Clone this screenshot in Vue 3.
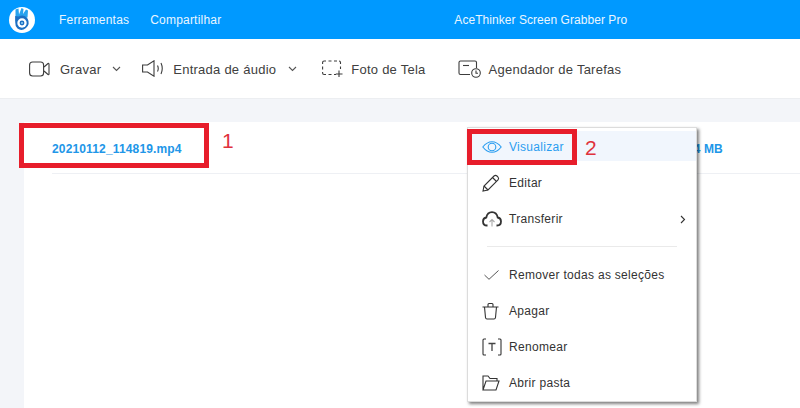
<script setup>
const menuTop = [
  { key: 'view', label: 'Visualizar', active: true },
  { key: 'edit', label: 'Editar' },
  { key: 'upload', label: 'Transferir', more: true },
]
const menuBottom = [
  { key: 'check', label: 'Remover todas as seleções' },
  { key: 'trash', label: 'Apagar' },
  { key: 'rename', label: 'Renomear' },
  { key: 'folder', label: 'Abrir pasta' },
]
</script>

<template>
  <div class="app">
    <header class="topbar">
      <svg class="logo" viewBox="0 0 26 26">
        <circle cx="13" cy="13" r="13" fill="#fff" />
        <path d="M6.500 2.500 9.500 1.500 10 7.500 12.500 1 14.500 2 14 7 17 2.500 19 3.500 18.500 10.500 6.500 14Z" fill="#27a3ee" />
        <path d="M6.200 9 9.500 9.500Q15 6.500 18.500 11.500 21.500 17 17 21 12.500 24.500 8.500 21.500 6 19 6.200 15Z" fill="#1c6fc2" />
        <circle cx="13" cy="16" r="4.700" fill="#fff" />
        <circle cx="13" cy="16" r="2.400" fill="#1c6fc2" />
        <circle cx="13" cy="16" r="1" fill="#8fd0f5" />
      </svg>
      <nav class="topnav">
        <span>Ferramentas</span>
        <span>Compartilhar</span>
      </nav>
      <span class="apptitle">AceThinker Screen Grabber Pro</span>
    </header>

    <div class="toolbar">
      <div class="tool tool-rec">
        <svg width="21" height="16" viewBox="0 0 21 16">
          <rect x="0.600" y="1" width="14" height="14" rx="3" />
          <path d="M15 6 19 2.500Q20 2 20 3V13Q20 14 19 13.500L15 10" />
        </svg>
        <span class="tool-label">Gravar</span>
        <svg class="caret" width="9" height="6" viewBox="0 0 9 6"><path d="M1 1 4.500 4.500 8 1" /></svg>
      </div>
      <div class="tool tool-audio">
        <svg width="22" height="17" viewBox="0 0 22 17">
          <path d="M.6 5H5.500L12 .8V16.200L5.500 12H.6Z" />
          <path d="M15.500 5.500Q17 8.500 15.500 11.500M19 3Q21.500 8.500 19 14" />
        </svg>
        <span class="tool-label">Entrada de áudio</span>
        <svg class="caret" width="9" height="6" viewBox="0 0 9 6"><path d="M1 1 4.500 4.500 8 1" /></svg>
      </div>
      <div class="tool tool-shot">
        <svg width="21" height="17" viewBox="0 0 21 17">
          <path d="M.6 4V2.500Q.6 1 2.100 1H4M6.500 1H9.500M12 1H15M17 1Q18.500 1 18.500 2.500V4M18.500 6.500V9M.6 6.500V9.500M.6 12V13Q.6 14.500 2.100 14.500H4M6.500 14.500H9.500M12 14.500H14" />
          <path d="M17 10.500V17M13.800 14H20.500" />
        </svg>
        <span class="tool-label">Foto de Tela</span>
      </div>
      <div class="tool tool-plan">
        <svg width="23" height="18" viewBox="0 0 23 18">
          <path d="M12 14.500H2.500Q1 14.500 1 13V2.500Q1 1 2.500 1H17Q18.500 1 18.500 2.500V8" />
          <path d="M5 5.500H11" />
          <circle cx="18" cy="13" r="4.300" />
          <path d="M18 10.500V13.300H20" />
        </svg>
        <span class="tool-label">Agendador de Tarefas</span>
      </div>
    </div>

    <main class="content">
      <section class="list">
        <div class="row">
          <span class="filename">20210112_114819.mp4</span>
          <span class="filesize">4 MB</span>
        </div>
      </section>
    </main>

    <div class="mark mark-file"></div>
    <span class="num num-1">1</span>

    <div class="menu">
      <div v-for="item in menuTop" :key="item.key" class="item" :class="{ active: item.active }">
        <span class="ico">
          <svg v-if="item.key === 'view'" width="20" height="12" viewBox="0 0 20 12">
            <path d="M.8 6Q5 .7 10 .7T19.200 6Q15 11.300 10 11.300T.8 6Z" />
            <circle cx="10" cy="6" r="3.800" />
          </svg>
          <svg v-else-if="item.key === 'edit'" width="18" height="18" viewBox="0 0 18 18">
            <path d="M1 17 2 12 12 2Q13.500.8 15 2L16 3Q17.200 4.500 16 6L6 16Z" />
            <path d="M2 12 6 16M10.500 3.500 14.500 7.500" />
          </svg>
          <svg v-else width="20" height="16" viewBox="0 0 20 16">
            <path class="thick" d="M5.500 14.500H5Q1 14.500 1 10.500Q1 7 4.300 6.500Q5.300 1.200 10 1.200T15.700 6.500Q19 7 19 10.500Q19 14.500 15 14.500H14.500" />
            <path class="grey" d="M10 15.500V8.500M7.500 11 10 8.500 12.500 11" />
          </svg>
        </span>
        <span class="label">{{ item.label }}</span>
        <svg v-if="item.more" class="more" width="6" height="9" viewBox="0 0 6 9"><path d="M1 1 4.500 4.500 1 8" /></svg>
      </div>
      <div class="divider"></div>
      <div v-for="item in menuBottom" :key="item.key" class="item">
        <span class="ico">
          <svg v-if="item.key === 'check'" class="ico-check" width="15" height="10" viewBox="0 0 15 10">
            <path d="M.5 5 5 9.300 14.500.5" />
          </svg>
          <svg v-else-if="item.key === 'trash'" width="17" height="18" viewBox="0 0 17 18">
            <path d="M.5 5H16.500M2.500 5 3.500 15.500Q3.700 17 5 17H12Q13.300 17 13.500 15.500L14.500 5M6 5V2.500Q6 1.500 7 1.500H10Q11 1.500 11 2.500V5" />
          </svg>
          <svg v-else-if="item.key === 'rename'" width="20" height="18" viewBox="0 0 20 18">
            <path d="M4 1H2Q1 1 1 2V16Q1 17 2 17H4M16 1H18Q19 1 19 2V16Q19 17 18 17H16" />
            <path class="t" d="M6.500 5.500H13.500M10 5.500V13" />
          </svg>
          <svg v-else width="18" height="16" viewBox="0 0 18 16">
            <path d="M1 15V1H6L8 3.500H15V6M1 15H14L17 6H4L1 15Z" />
          </svg>
        </span>
        <span class="label">{{ item.label }}</span>
      </div>
    </div>

    <div class="mark mark-view"></div>
    <span class="num num-2">2</span>
  </div>
</template>

<style scoped>
.app {
  position: relative;
  width: 800px;
  height: 408px;
  overflow: hidden;
  display: flex;
  flex-direction: column;
  background: #f3f5f9;
  font-family: "Liberation Sans", Arial, sans-serif;
  color: #333;
}

.topbar {
  height: 39px;
  flex: none;
  display: flex;
  align-items: center;
  padding-left: 9px;
  background: #0099ff;
  color: #eaf6ff;
  font-size: 12px;
  letter-spacing: 0.2px;
}

.logo {
  width: 26px;
  height: 26px;
}

.topnav {
  display: flex;
  gap: 21px;
  margin-left: 24px;
}

.apptitle {
  margin-left: 233px;
  letter-spacing: 0.05px;
}

.toolbar {
  height: 59px;
  flex: none;
  display: flex;
  align-items: center;
  padding-left: 29px;
  background: #fff;
  border-bottom: 1px solid #eceef1;
  font-size: 13px;
  letter-spacing: 0.25px;
  color: #404040;
}

.tool {
  display: flex;
  align-items: center;
  gap: 10px;
}

.tool svg {
  fill: none;
  stroke: #3c3c3c;
  stroke-width: 1.1;
}

.tool-label {
  padding-top: 1px;
}

.tool-rec {
  margin-right: 21px;
}

.tool-audio {
  gap: 9px;
  margin-right: 25px;
}

.tool-shot {
  gap: 8px;
  margin-right: 32px;
}

.tool-plan {
  gap: 8px;
}

.caret {
  margin-left: 1px;
}

.tool .caret {
  stroke: #555;
}

.tool-audio .caret {
  margin-left: 3px;
}

.content {
  flex: 1;
  padding: 23px 0 0 24px;
}

.list {
  height: 100%;
  background: #fff;
}

.row {
  height: 51px;
  margin-left: 28px;
  display: flex;
  align-items: center;
  border-bottom: 1px solid #eef0f4;
  font-size: 12px;
  font-weight: 700;
  letter-spacing: 0.15px;
  color: #2196e8;
}

.filename {
  padding-top: 2px;
}

.filesize {
  margin-left: 512px;
  margin-top: 2px;
}

.mark {
  position: absolute;
  border: 5px solid #e71d2b;
}

.mark-file {
  left: 19px;
  top: 123px;
  width: 180px;
  height: 35px;
}

.mark-view {
  left: 467px;
  top: 129px;
  width: 100px;
  height: 26px;
}

.num {
  position: absolute;
  font-size: 21px;
  line-height: 24px;
  color: #e0323c;
}

.num-1 {
  left: 222px;
  top: 129px;
}

.num-2 {
  left: 585px;
  top: 136px;
}

.menu {
  position: absolute;
  left: 467px;
  top: 127px;
  width: 230px;
  height: 275px;
  box-sizing: border-box;
  padding-top: 3px;
  display: flex;
  flex-direction: column;
  gap: 6px;
  background: #fff;
  border: 1px solid #dcdcdc;
  box-shadow: 2px 2px 3px rgba(0, 0, 0, 0.5);
  font-size: 12px;
  letter-spacing: 0.3px;
}

.item {
  height: 30px;
  box-sizing: border-box;
  padding-top: 2px;
  flex: none;
  display: flex;
  align-items: center;
  color: #333;
}

.item.active {
  background: #f1f6fd;
  color: #2a9df0;
}

.ico {
  width: 41px;
  padding-left: 14px;
  box-sizing: border-box;
  display: flex;
  align-items: center;
  flex: none;
}

.ico svg {
  fill: none;
  stroke: #333;
  stroke-width: 1.1;
}

.active .ico svg {
  stroke: #2a9df0;
}

.ico svg .thick {
  stroke-width: 1.8;
}

.ico svg .grey {
  stroke: #aaa;
}

.ico svg .t {
  stroke: #444;
  stroke-width: 1.3;
}

.ico .ico-check {
  margin-left: 2px;
  stroke: #555;
  stroke-width: 1;
}

.more {
  margin-left: auto;
  margin-right: 10px;
  fill: none;
  stroke: #333;
  stroke-width: 1.1;
}

.divider {
  height: 1px;
  margin: 7px 19px 6px;
  flex: none;
  background: #eaeaea;
}
</style>

<style>
html,
body {
  margin: 0;
}
</style>
